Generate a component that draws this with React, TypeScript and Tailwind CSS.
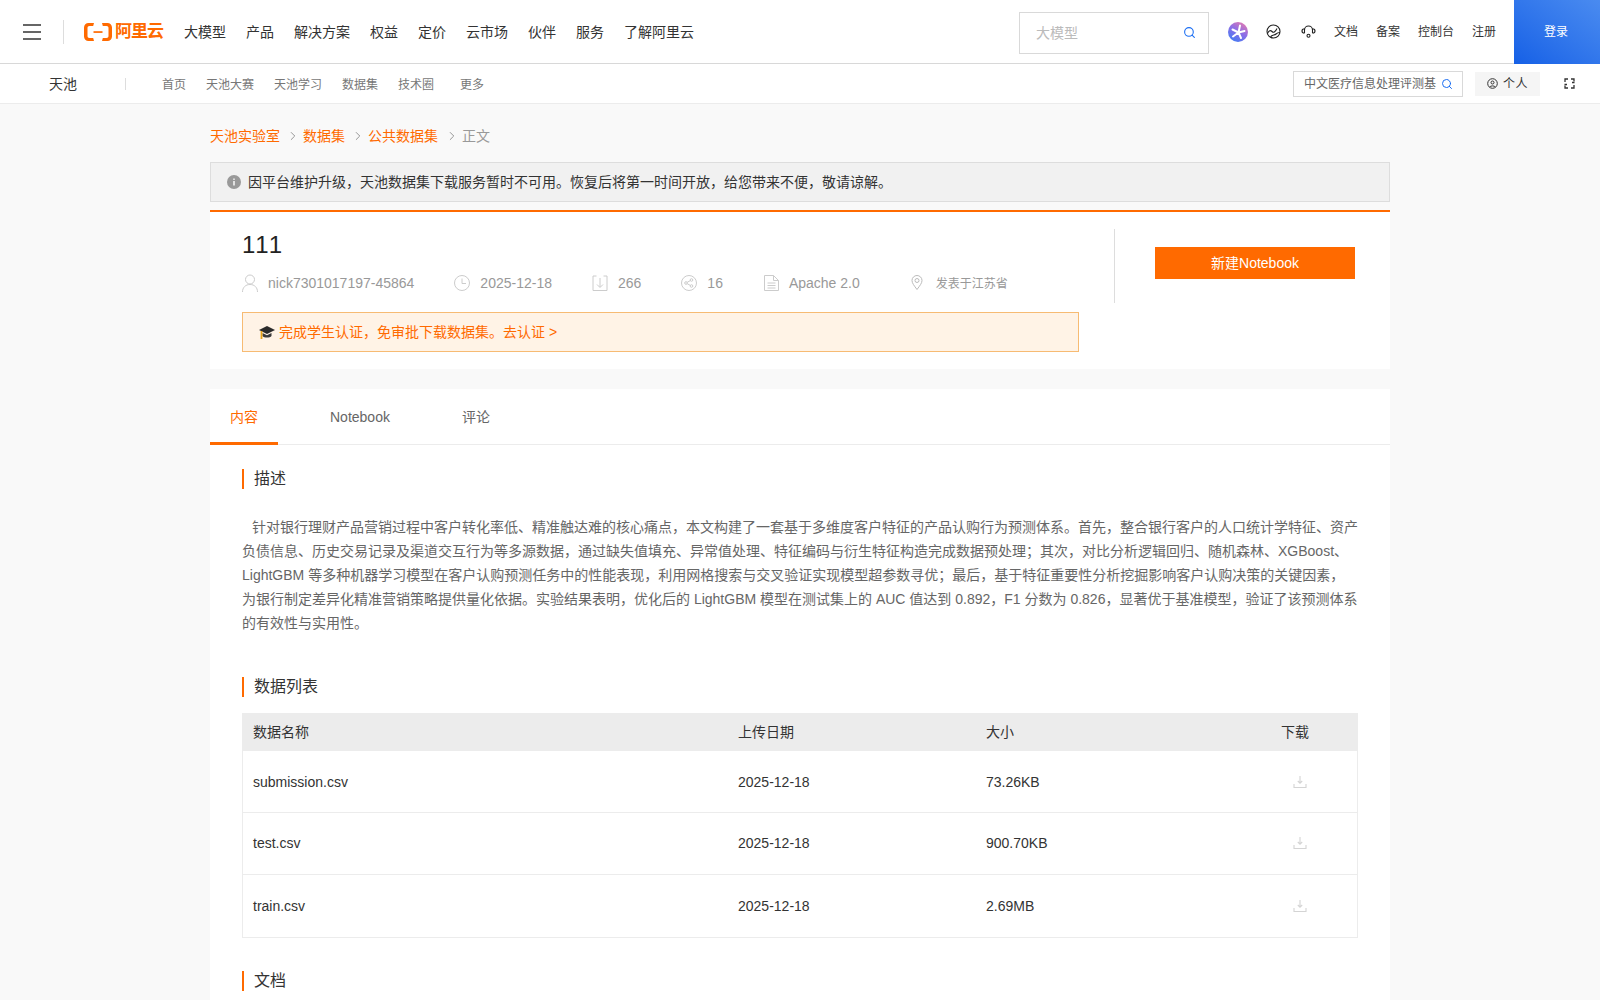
import { ChevronRight, Search } from 'lucide-react';

const topNav = ['大模型', '产品', '解决方案', '权益', '定价', '云市场', '伙伴', '服务', '了解阿里云'];
const subNav = ['首页', '天池大赛', '天池学习', '数据集', '技术圈'];

const files = [
  { name: 'submission.csv', date: '2025-12-18', size: '73.26KB', h: 'h-[62px]' },
  { name: 'test.csv', date: '2025-12-18', size: '900.70KB', h: 'h-[62px] pb-[2px]' },
  { name: 'train.csv', date: '2025-12-18', size: '2.69MB', h: 'h-[62px]' },
];

function Logo() {
  return (
    <div className="flex items-center gap-[3px] text-[#ff6a00]">
      <svg width="28" height="18" viewBox="0 0 28 18" fill="#ff6a00">
        <path d="M10 0H4.500C2 0 0 2 0 4.500v9C0 16 2 18 4.500 18H10l-.8-3H5.500C4.200 15 3.500 14.200 3.500 13V5c0-1.200.7-2 2-2h3.700z" />
        <path d="M18 0h5.500C26 0 28 2 28 4.500v9c0 2.500-2 4.500-4.500 4.500H18l.8-3h3.700c1.300 0 2-.8 2-2V5c0-1.200-.7-2-2-2h-3.700z" />
        <rect x="9.500" y="8.200" width="9" height="1.700" />
      </svg>
      <span className="text-[17px] font-bold leading-none tracking-[-1px]">阿里云</span>
    </div>
  );
}

function Heading({ children }: { children: string }) {
  return <h2 className="border-l-2 border-[#ff6a00] pl-[10px] text-base leading-5 text-[#333]">{children}</h2>;
}

function DownloadIcon() {
  return (
    <svg width="14" height="14" viewBox="0 0 14 14" fill="none" stroke="#d4d4d4" strokeWidth="1.100">
      <path d="M7 1v7M4.800 6 7 8.200 9.200 6M1 9v3.500h12V9" />
    </svg>
  );
}

export default function App() {
  return (
    <div className="h-[1000px] overflow-hidden bg-[#f9f9f9] font-['Liberation_Sans','Noto_Sans_CJK_SC',sans-serif] text-sm text-[#333]">
      <header className="flex h-16 items-center border-b border-[#d8d8d8] bg-white pl-[23px]">
        <div className="flex w-[18px] flex-col gap-[5px]">
          <span className="h-[2px] bg-[#666]" />
          <span className="h-[2px] bg-[#666]" />
          <span className="h-[2px] bg-[#666]" />
        </div>
        <span className="ml-[22px] h-6 w-px bg-[#ddd]" />
        <div className="ml-5">
          <Logo />
        </div>
        <nav className="ml-[21px] flex gap-5 text-[#333]">
          {topNav.map((item) => (
            <a key={item}>{item}</a>
          ))}
        </nav>
        <div className="ml-auto mt-[2px] flex h-[42px] w-[190px] translate-x-px items-center justify-between border border-[#d9d9d9] pl-4 pr-[12px] text-[#bbb]">
          大模型
          <Search size={13} color="#1b6ef3" />
        </div>
        <svg className="ml-[20px]" width="20" height="20" viewBox="0 0 20 20">
          <defs>
            <linearGradient id="star" x1="0.2" y1="1" x2="0.8" y2="0">
              <stop offset="0" stopColor="#3f7cf4" />
              <stop offset="0.55" stopColor="#8e6ee6" />
              <stop offset="1" stopColor="#e57ab0" />
            </linearGradient>
          </defs>
          <circle cx="10" cy="10" r="10" fill="url(#star)" />
          <path d="M10.500 10.500 12 3.500M10.500 10.500 16.500 9M10.500 10.500 13 16M10.500 10.500 5 14.500M10.500 10.500 4.500 7.500" stroke="#fff" strokeWidth="2" strokeLinecap="round" />
        </svg>
        <svg className="ml-[18px]" width="15" height="15" viewBox="0 0 15 15" fill="none" stroke="#222" strokeWidth="1.100">
          <circle cx="7.500" cy="7.500" r="6.500" />
          <path d="M1.500 9.500C3 6.500 4.500 6 6 7.500s3 1 5-3M4.500 13C6 10.500 8.500 11.500 10 10s2.500-1.500 4-1.500" />
        </svg>
        <svg className="ml-[20px]" width="15" height="15" viewBox="0 0 15 15" fill="none" stroke="#222" strokeWidth="1.100">
          <path d="M3.500 9V6a4 4 0 0 1 8 0v3M3.500 4.800C2 4.800 1 5.800 1 7s1 2.200 2.500 2.200M11.500 4.800c1.500 0 2.500 1 2.500 2.200s-1 2.200-2.500 2.200" />
          <circle cx="7.500" cy="11.800" r="1.500" />
        </svg>
        <div className="ml-[18px] flex gap-[18px] text-xs text-[#333]">
          <a>文档</a>
          <a>备案</a>
          <a>控制台</a>
          <a>注册</a>
        </div>
        <button className="ml-[18px] h-16 w-[86px] bg-gradient-to-tr from-[#1560e6] to-[#4a8bf0] pr-[2px] text-xs text-white">登录</button>
      </header>

      <div className="flex h-10 items-center border-b border-[#ececec] bg-white pl-[49px]">
        <span className="mt-px text-[#333]">天池</span>
        <span className="ml-[48px] h-3 w-px bg-[#ddd]" />
        <nav className="ml-9 mt-[2px] flex gap-5 text-xs text-[#777]">
          {subNav.map((item) => (
            <a key={item}>{item}</a>
          ))}
          <a className="ml-[6px]">更多</a>
        </nav>
        <div className="ml-auto flex h-[26px] w-[170px] items-center gap-[5px] border border-[#d9d9d9] pl-[10px] text-xs text-[#666]">
          <span className="whitespace-nowrap">中文医疗信息处理评测基</span>
          <Search size={12} color="#1b6ef3" />
        </div>
        <div className="ml-3 flex h-6 w-[65px] items-center justify-center gap-[5px] bg-[#f5f5f5] text-xs text-[#333]">
          <svg width="11" height="11" viewBox="0 0 11 11" fill="none" stroke="#333">
            <circle cx="5.500" cy="5.500" r="4.800" />
            <circle cx="5.500" cy="4.500" r="1.500" />
            <path d="M2.800 9c.6-1.500 4.800-1.500 5.400 0" />
          </svg>
          <span className="tracking-[0.5px]">个人</span>
        </div>
        <svg className="ml-6 mr-[25px]" width="11" height="11" viewBox="0 0 11 11" fill="none" stroke="#333" strokeWidth="1.300">
          <path d="M4 1H1v3M7 1h3v2.500M1 7.500V10h3M10 7v3H7" />
          <path d="M8 4.500h2.500M.5 6.500H3" strokeWidth="1.600" />
        </svg>
      </div>

      <main className="mx-auto w-[1180px]">
        <div className="flex h-[58px] items-center pt-[6px] text-[#ff6a00]">
          <a>天池实验室</a>
          <ChevronRight className="ml-[6px] mr-[3px]" size={14} color="#888" strokeWidth={1.5} />
          <a>数据集</a>
          <ChevronRight className="ml-[6px] mr-[3px]" size={14} color="#888" strokeWidth={1.5} />
          <a>公共数据集</a>
          <ChevronRight className="ml-[7px] mr-[3px]" size={14} color="#888" strokeWidth={1.5} />
          <span className="text-[#999]">正文</span>
        </div>

        <div className="flex h-10 items-center gap-[7px] border border-[#ddd] bg-[#f1f1f1] pl-4">
          <svg width="14" height="14" viewBox="0 0 14 14">
            <circle cx="7" cy="7" r="7" fill="#999" />
            <rect x="6.300" y="6" width="1.400" height="4.500" fill="#fff" />
            <rect x="6.300" y="3.500" width="1.400" height="1.400" fill="#fff" />
          </svg>
          因平台维护升级，天池数据集下载服务暂时不可用。恢复后将第一时间开放，给您带来不便，敬请谅解。
        </div>

        <section className="mt-2 flex h-[159px] border-t-2 border-[#ff6a00] bg-white pl-8">
          <div className="w-[837px]">
            <h1 className="mt-[18px] text-2xl leading-[30px] text-[#222] [font-kerning:none]">111</h1>
            <div className="mt-[13px] flex h-5 items-center text-[#999]">
              <svg width="16" height="18" viewBox="0 0 16 18" fill="none" stroke="#ccc">
                <circle cx="8" cy="5.500" r="4.500" />
                <path d="M.5 18c0-4.500 3-7.500 7.500-7.500s7.500 3 7.500 7.500" />
              </svg>
              <span className="ml-[10px]">nick7301017197-45864</span>
              <svg className="ml-10" width="16" height="16" viewBox="0 0 16 16" fill="none" stroke="#ccc">
                <circle cx="8" cy="8" r="7.500" />
                <path d="M8 3.500V8.500h4" />
              </svg>
              <span className="ml-[10px]">2025-12-18</span>
              <svg className="ml-10" width="16" height="16" viewBox="0 0 16 16" fill="none" stroke="#ccc">
                <path d="M4.500 1H1v14.500h14V1h-3.500M8 3v9M5 9.500 8 12.500l3-3" />
              </svg>
              <span className="ml-[10px]">266</span>
              <svg className="ml-10" width="16" height="16" viewBox="0 0 16 16" fill="none" stroke="#ccc">
                <circle cx="8" cy="8" r="7.500" />
                <circle cx="5" cy="8" r="1.300" />
                <circle cx="10.500" cy="5" r="1.300" />
                <circle cx="10.500" cy="11" r="1.300" />
                <path d="M6.200 7.300 9.300 5.600M6.200 8.700l3.100 1.700" />
              </svg>
              <span className="ml-[10px]">16</span>
              <svg className="ml-[41px]" width="15" height="16" viewBox="0 0 15 16" fill="none" stroke="#ccc">
                <path d="M.5.500h9l5 5v10H.5zM9.500.5v5h5M3.500 8h8M3.500 10.500h8M3.500 13h8" />
              </svg>
              <span className="ml-[10px]">Apache 2.0</span>
              <svg className="mb-[1px] ml-[51px]" width="12" height="15" viewBox="0 0 12 15" fill="none" stroke="#bbb">
                <path d="M6 14.500C3 10.500 1 8 1 5.500a5 5 0 0 1 10 0C11 8 9 10.500 6 14.500z" />
                <circle cx="6" cy="5.500" r="2" />
              </svg>
              <span className="ml-[13px] mt-px text-xs">发表于江苏省</span>
            </div>
            <div className="mt-[19px] flex h-10 items-center gap-[4px] border border-[#f7bb73] bg-[#fff3e6] pl-4 text-[#ff6a00]">
              <svg width="16" height="15" viewBox="0 0 16 15">
                <path d="M8 1 16 5 8 9 0 5z" fill="#2b2b2b" />
                <path d="M3.500 8v3c1.500 2 7.500 2 9 0V8L8 10.300z" fill="#3a3a3a" />
                <path d="M2.500 6v8" stroke="#e8a317" strokeWidth="1.800" />
              </svg>
              完成学生认证，免审批下载数据集。去认证 &gt;
            </div>
          </div>
          <div className="ml-[35px] mt-[17px] flex h-[74px] w-[275px] border-l border-[#ddd] pl-10 pt-[18px]">
            <button className="h-8 w-[200px] bg-[#ff6a00] text-white">新建Notebook</button>
          </div>
        </section>

        <section className="mt-5 bg-white pb-[60px]">
          <div className="flex h-[56px] border-b border-[#ececec] text-[#666]">
            <a className="-mb-px flex w-[68px] items-center justify-center border-b-[3px] border-[#ff6a00] pt-[3px] text-[#ff6a00]">内容</a>
            <a className="ml-[52px] flex items-center">Notebook</a>
            <a className="ml-[72px] flex items-center">评论</a>
          </div>
          <div className="px-8 pt-6">
            <Heading>描述</Heading>
            <p className="mt-[26px] indent-[10px] leading-6 text-[#666]">
              针对银行理财产品营销过程中客户转化率低、精准触达难的核心痛点，本文构建了一套基于多维度客户特征的产品认购行为预测体系。首先，整合银行客户的人口统计学特征、资产负债信息、历史交易记录及渠道交互行为等多源数据，通过缺失值填充、异常值处理、特征编码与衍生特征构造完成数据预处理；其次，对比分析逻辑回归、随机森林、XGBoost、LightGBM 等多种机器学习模型在客户认购预测任务中的性能表现，利用网格搜索与交叉验证实现模型超参数寻优；最后，基于特征重要性分析挖掘影响客户认购决策的关键因素，为银行制定差异化精准营销策略提供量化依据。实验结果表明，优化后的 LightGBM 模型在测试集上的 AUC 值达到 0.892，F1 分数为 0.826，显著优于基准模型，验证了该预测体系的有效性与实用性。
            </p>
            <div className="mt-[42px]">
              <Heading>数据列表</Heading>
            </div>
            <div className="mt-4 border-x border-b border-[#ececec]">
              <div className="flex h-[38px] items-center bg-[#ececec] text-[#333]">
                <span className="w-[495px] pl-[10px]">数据名称</span>
                <span className="w-[248px]">上传日期</span>
                <span className="w-[295px]">大小</span>
                <span>下载</span>
              </div>
              {files.map((f, i) => (
                <div key={f.name} className={`flex items-center ${f.h} ${i < 2 ? 'border-b border-[#ececec]' : ''}`}>
                  <span className="w-[495px] pl-[10px]">{f.name}</span>
                  <span className="w-[248px]">{f.date}</span>
                  <span className="w-[307px]">{f.size}</span>
                  <DownloadIcon />
                </div>
              ))}
            </div>
            <div className="mt-[33px]">
              <Heading>文档</Heading>
            </div>
          </div>
        </section>
      </main>
    </div>
  );
}
